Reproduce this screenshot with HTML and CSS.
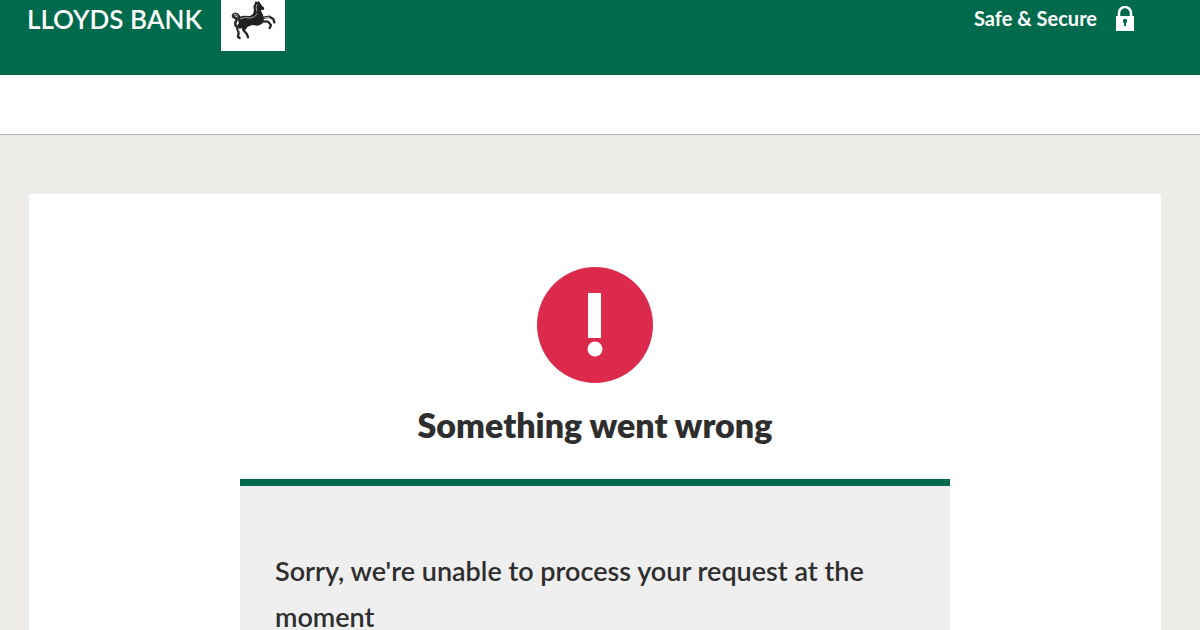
FILE: index.html
```html
<!DOCTYPE html>
<html lang="en">
<head>
<meta charset="utf-8">
<meta name="viewport" content="width=device-width, initial-scale=1">
<title>Something went wrong</title>
<link rel="stylesheet" href="styles.css">
</head>
<body>
<header class="header">
  <div class="brand">
    <span class="brand-name">LLOYDS BANK</span>
    <svg class="brand-horse" viewBox="0 0 192 153" aria-hidden="true">
      <rect width="192" height="153" fill="#fff"/>
      <g fill="none" stroke="#252525" stroke-linecap="round" stroke-linejoin="round">
        <path d="M55 55C53 41 38 38 36 47C35 55 49 51 47 59C45 65 40 66 44 77" stroke-width="8"/>
        <path d="M59 68L48 84L53 98L51 111L56 114" stroke-width="7"/>
        <path d="M68 77L67 90L78 103L81 112" stroke-width="7"/>
        <path d="M124 54L145 50L157 57L160 67" stroke-width="7"/>
        <path d="M121 64L141 65L150 75L146 84" stroke-width="7"/>
      </g>
      <path fill="#202020" d="M104 3L109 7L113 2L117 9L123 17L130 24L128 30L121 29L120 34L126 44L129 57L124 71L111 77L94 75L80 80L73 90L61 85L50 88L54 71L51 59L56 50L68 47L87 48L96 42L99 31L97 20L101 11Z"/>
      <g fill="none" stroke="#a4a4a4" stroke-width="3" stroke-linecap="round">
        <path d="M58 56Q73 50 88 54Q101 54 109 41"/>
        <path d="M108 13Q103 23 107 33"/>
        <path d="M39 43Q46 39 51 47"/>
        <path d="M129 54L144 51"/>
        <path d="M54 84L52 87L57 99"/>
      </g>
    </svg>
  </div>
  <div class="secure">
    <span>Safe &amp; Secure</span>
    <svg class="lock" viewBox="0 0 18 25" aria-hidden="true">
      <path d="M3 11V7a6 6 0 0 1 12 0v4" fill="none" stroke="#fff" stroke-width="2.5"/>
      <path d="M0 10h18v15H0z" fill="#fff"/>
      <circle cx="9" cy="15" r="2.2" fill="#006a4d"/>
      <path d="M8 15h2v5H8z" fill="#006a4d"/>
    </svg>
  </div>
</header>
<div class="subheader"></div>
<main class="page">
  <section class="card">
    <svg class="alert" viewBox="0 0 116 116" aria-hidden="true">
      <circle cx="58" cy="58" r="58" fill="#dc2a4c"/>
      <path d="M51 26h13v45H51z" fill="#fff"/>
      <circle cx="58" cy="82" r="7.5" fill="#fff"/>
    </svg>
    <h1 class="title">Something went wrong</h1>
    <div class="panel">
      <p class="message">Sorry, we're unable to process your request at the moment</p>
    </div>
  </section>
</main>
</body>
</html>
```
FILE: styles.css
```css
* {
  box-sizing: border-box;
}

body {
  margin: 0;
  background: #edece8;
  color: #2e2e2e;
  font-family: Lato, "Noto Sans", sans-serif;
}

.header {
  display: flex;
  justify-content: space-between;
  align-items: flex-start;
  padding: 0 66px 24px 27px;
  background: #006a4d;
  color: #fff;
}

.brand {
  display: flex;
  align-items: flex-start;
  gap: 19px;
}

.brand-name {
  font-size: 26px;
  font-weight: 600;
  line-height: 38px;
}

.brand-horse {
  display: block;
  width: 64px;
  height: 51px;
}

.secure {
  display: flex;
  align-items: center;
  gap: 19px;
  font-size: 20px;
  font-weight: 700;
  line-height: 36px;
}

.lock {
  width: 18px;
  height: 25px;
}

.subheader {
  height: 60px;
  border-bottom: 1px solid #b4b4b4;
  background: #fff;
}

.page {
  padding: 59px 39px 0 29px;
}

.card {
  display: flex;
  flex-direction: column;
  align-items: center;
  padding: 73px 24px 60px;
  background: #fff;
}

.alert {
  width: 116px;
  height: 116px;
}

.title {
  margin: 18px 0 30px;
  font-size: 34px;
  font-weight: 800;
  line-height: 48px;
}

.panel {
  width: 100%;
  max-width: 710px;
  padding: 62px 35px;
  border-top: 7px solid #006a4d;
  background: #efefef;
}

.message {
  margin: 0;
  font-size: 27px;
  font-weight: 600;
  line-height: 46px;
}
```
